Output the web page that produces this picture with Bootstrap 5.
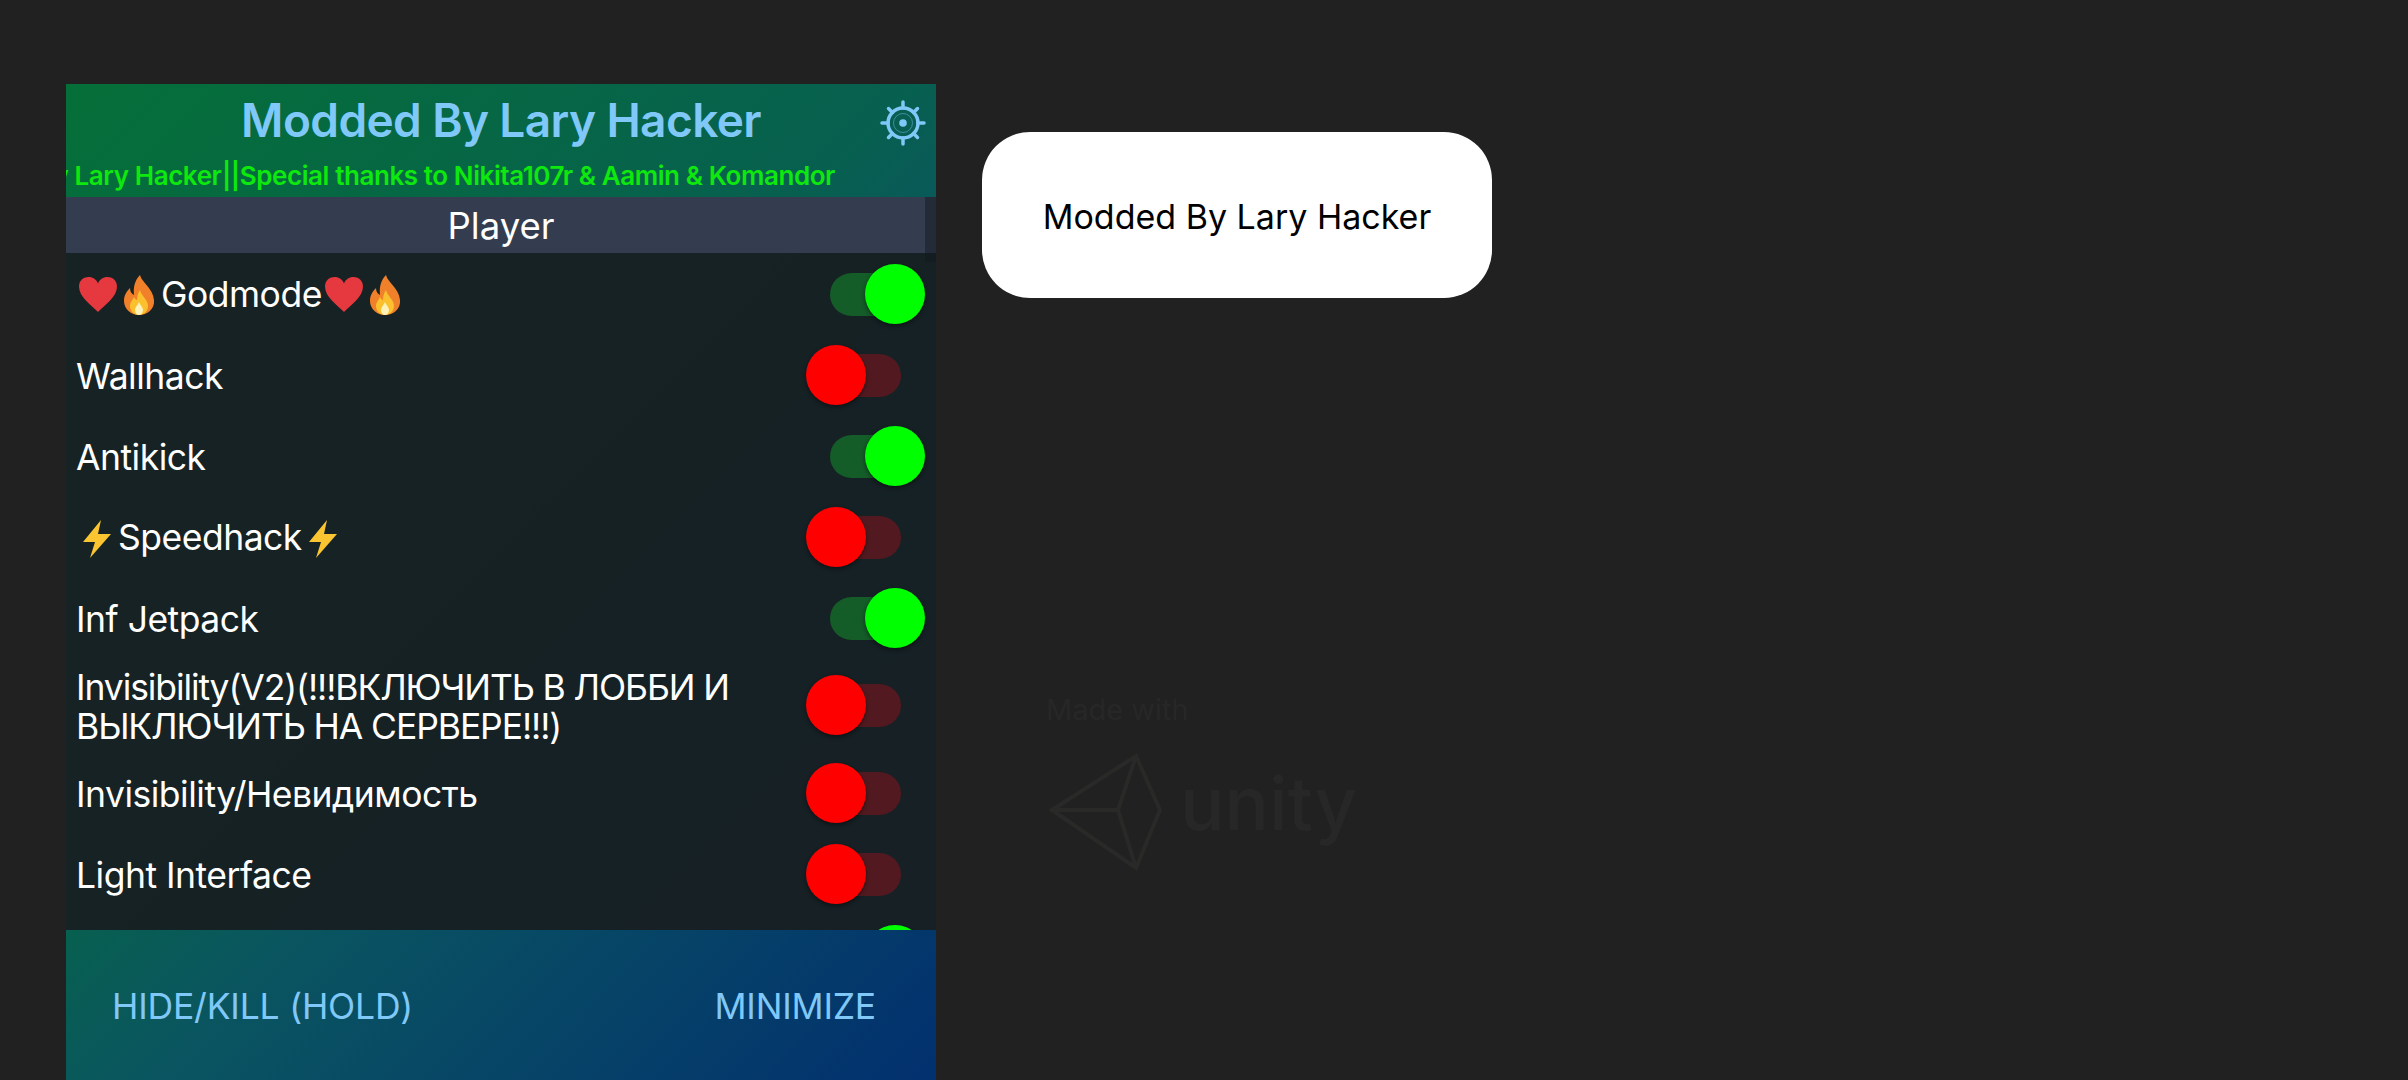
<!DOCTYPE html>
<html lang="ru">
<head>
  <meta charset="UTF-8">
  <meta name="viewport" content="width=device-width, initial-scale=1">
  <title>Modded By Lary Hacker</title>
  <link href="https://cdn.jsdelivr.net/npm/bootstrap@5.3.0/dist/css/bootstrap.min.css" rel="stylesheet">
  <style>
    html, body { height: 100%; }
    body {
      background: #212121;
      font-family: Inter, "Noto Sans", sans-serif;
      overflow: hidden;
    }
    .page-wrap { height: 1080px; padding: 84px 0 0 66px; }

    .mod-panel {
      width: 870px;
      height: 996px;
      background: linear-gradient(135deg, #056f38 0%, #07604f 45%, #0a5560 58%, #02306f 100%);
    }
    .mod-head { height: 113px; }
    .mod-title {
      height: 72px;
      color: #7fc8f8;
      font-size: 46px;
      font-weight: 600;
      letter-spacing: -0.6px;
    }
    .gear-btn { right: 9px; top: 15px; width: 48px; height: 48px; }
    .mod-ticker {
      height: 39px;
      padding-right: 101px;
      color: #0ee80e;
      font-size: 26px;
      font-weight: 600;
      letter-spacing: -0.42px;
      white-space: nowrap;
    }
    .mod-tab {
      height: 56px;
      padding-top: 2px;
      background: #333d4f;
      color: #fff;
      font-size: 36.5px;
    }
    .tab-scroll { right: 0; top: 0; width: 11px; height: 65px; background: rgba(15, 22, 28, .45); }
    .mod-list {
      height: 677px;
      background: rgba(23, 31, 34, .96);
    }
    .mod-row {
      min-height: 81px;
      padding: 0 11px 0 10px;
      color: #fff;
      font-size: 35.5px;
      line-height: 39px;
      letter-spacing: -0.5px;
    }
    .mod-row.tall { min-height: 94px; }
    .mod-label { max-width: 690px; padding-top: 3px; }
    .mod-label.tight { letter-spacing: -1.1px; }
    .emo { display: inline-block; vertical-align: -8px; }
    .emo-heart { margin: 0 4px 0 2px; }
    .emo-fire { margin-right: 5px; }
    .emo-bolt { margin: 0 6px; }

    .hack-switch {
      width: 119px;
      height: 60px;
      flex: 0 0 auto;
    }
    .switch-track {
      right: 24px;
      top: 9px;
      width: 71px;
      height: 43px;
      border-radius: 22px;
      background: #521a20;
    }
    .switch-knob {
      left: 0;
      top: 0;
      width: 60px;
      height: 60px;
      border-radius: 50%;
      background: #ff0000;
      box-shadow: 0 2px 4px rgba(0, 0, 0, .45);
    }
    .hack-switch.is-on .switch-track { background: #145c28; }
    .hack-switch.is-on .switch-knob { left: 59px; background: #00ff00; }

    .mod-foot {
      height: 150px;
      padding: 3px 60px 0 46px;
      color: #7fc8f8;
      font-size: 35.5px;
      letter-spacing: -0.2px;
    }

    .toast-box {
      left: 982px;
      top: 132px;
      width: 510px;
      height: 166px;
      padding-top: 3px;
      background: #fff;
      border-radius: 48px;
      color: #000;
      font-size: 34px;
    }
    .ghost-made { left: 1046px; top: 688px; color: #272727; font-size: 29px; }
    .ghost-logo { left: 1048px; top: 750px; }
    .ghost-unity { left: 1180px; top: 766px; color: #272727; font-size: 74px; font-weight: 500; line-height: 1; }
  </style>
</head>
<body>
  <svg width="0" height="0" class="position-absolute">
    <defs>
      <symbol id="heart" viewBox="0 0 40 40">
        <path d="M20 37C13 30 1 22 1 11.500C1 5 6 2 10.500 2C15 2 18.500 4.500 20 8.500C21.500 4.500 25 2 29.500 2C34 2 39 5 39 11.500C39 22 27 30 20 37Z" fill="#e5383f"/>
      </symbol>
      <symbol id="fire" viewBox="0 0 34 40">
        <path d="M18 0C20 8 31 13 32 25C33 34 25 40 17 40C9 40 2 34 2 26C2 20 5 16 8 13C8 17 10 19 12 20C11 12 13 5 18 0Z" fill="#f0802a"/>
        <path d="M18 15C19 21 26 24 26 31C26 36 22 40 17 40C12 40 8 36 8 31C8 27 11 25 12 22C13 24 14 25 15 25C15 21 16 18 18 15Z" fill="#fbc02d"/>
        <path d="M17 27C18 30 21 32 21 35C21 38 19 40 17 40C15 40 13 38 13 35C13 32 16 30 17 27Z" fill="#fff2b8"/>
      </symbol>
      <symbol id="bolt" viewBox="0 0 30 38">
        <path d="M19 0L1 22H13L8 38L29 14H16Z" fill="#fbc531"/>
      </symbol>
    </defs>
  </svg>

  <div class="page-wrap">
    <div class="mod-panel d-flex flex-column overflow-hidden">
      <div class="mod-head position-relative">
        <div class="mod-title d-flex align-items-center justify-content-center">Modded By Lary Hacker</div>
        <div class="gear-btn position-absolute">
          <svg width="48" height="48" viewBox="0 0 48 48" fill="none" stroke="#7fc8f8">
            <circle cx="24" cy="24" r="15" stroke-width="3.500"/>
            <circle cx="24" cy="24" r="9.500" stroke-width="1" opacity=".45"/>
            <circle cx="24" cy="24" r="3.800" fill="#7fc8f8" stroke="none"/>
            <path d="M24 9V3M24 39V45M9 24H3M39 24H45M13.400 13.400L9.500 9.500M34.600 13.400L38.500 9.500M13.400 34.600L9.500 38.500M34.600 34.600L38.500 38.500" stroke-width="3.500" stroke-linecap="round"/>
          </svg>
        </div>
        <div class="mod-ticker d-flex align-items-center justify-content-end overflow-hidden">Modded By Lary Hacker||Special thanks to Nikita107r &amp; Aamin &amp; Komandor</div>
      </div>

      <div class="mod-tab d-flex align-items-center justify-content-center position-relative">
        Player
        <span class="tab-scroll position-absolute"></span>
      </div>

      <div class="mod-list overflow-hidden">
        <div class="mod-row d-flex align-items-center justify-content-between">
          <div class="mod-label"><svg class="emo emo-heart" width="40" height="40"><use href="#heart"/></svg><svg class="emo emo-fire" width="34" height="40"><use href="#fire"/></svg>Godmode<svg class="emo emo-heart" width="40" height="40"><use href="#heart"/></svg><svg class="emo emo-fire" width="34" height="40"><use href="#fire"/></svg></div>
          <div class="hack-switch is-on position-relative"><span class="switch-track position-absolute"></span><span class="switch-knob position-absolute"></span></div>
        </div>
        <div class="mod-row d-flex align-items-center justify-content-between">
          <div class="mod-label">Wallhack</div>
          <div class="hack-switch position-relative"><span class="switch-track position-absolute"></span><span class="switch-knob position-absolute"></span></div>
        </div>
        <div class="mod-row d-flex align-items-center justify-content-between">
          <div class="mod-label">Antikick</div>
          <div class="hack-switch is-on position-relative"><span class="switch-track position-absolute"></span><span class="switch-knob position-absolute"></span></div>
        </div>
        <div class="mod-row d-flex align-items-center justify-content-between">
          <div class="mod-label"><svg class="emo emo-bolt" width="30" height="38"><use href="#bolt"/></svg>Speedhack<svg class="emo emo-bolt" width="30" height="38"><use href="#bolt"/></svg></div>
          <div class="hack-switch position-relative"><span class="switch-track position-absolute"></span><span class="switch-knob position-absolute"></span></div>
        </div>
        <div class="mod-row d-flex align-items-center justify-content-between">
          <div class="mod-label">Inf Jetpack</div>
          <div class="hack-switch is-on position-relative"><span class="switch-track position-absolute"></span><span class="switch-knob position-absolute"></span></div>
        </div>
        <div class="mod-row tall d-flex align-items-center justify-content-between">
          <div class="mod-label tight">Invisibility(V2)(!!!ВКЛЮЧИТЬ В ЛОББИ И ВЫКЛЮЧИТЬ НА СЕРВЕРЕ!!!)</div>
          <div class="hack-switch position-relative"><span class="switch-track position-absolute"></span><span class="switch-knob position-absolute"></span></div>
        </div>
        <div class="mod-row d-flex align-items-center justify-content-between">
          <div class="mod-label">Invisibility/Невидимость</div>
          <div class="hack-switch position-relative"><span class="switch-track position-absolute"></span><span class="switch-knob position-absolute"></span></div>
        </div>
        <div class="mod-row d-flex align-items-center justify-content-between">
          <div class="mod-label">Light Interface</div>
          <div class="hack-switch position-relative"><span class="switch-track position-absolute"></span><span class="switch-knob position-absolute"></span></div>
        </div>
        <div class="mod-row d-flex align-items-center justify-content-end">
          <div class="hack-switch is-on position-relative"><span class="switch-track position-absolute"></span><span class="switch-knob position-absolute"></span></div>
        </div>
      </div>

      <div class="mod-foot d-flex align-items-center justify-content-between">
        <span>HIDE/KILL (HOLD)</span>
        <span>MINIMIZE</span>
      </div>
    </div>
  </div>

  <div class="toast-box position-absolute d-flex align-items-center justify-content-center">Modded By Lary Hacker</div>

  <div class="ghost-made position-absolute">Made with</div>
  <svg class="ghost-logo position-absolute" width="120" height="125" viewBox="0 0 120 125" fill="none" stroke="#292927" stroke-width="4">
    <path d="M4 60L88 6L112 60L88 118Z"/>
    <path d="M4 60H70M70 60L88 6M70 60L88 118"/>
  </svg>
  <div class="ghost-unity position-absolute">unity</div>

  <script src="https://cdn.jsdelivr.net/npm/bootstrap@5.3.0/dist/js/bootstrap.bundle.min.js"></script>
</body>
</html>
